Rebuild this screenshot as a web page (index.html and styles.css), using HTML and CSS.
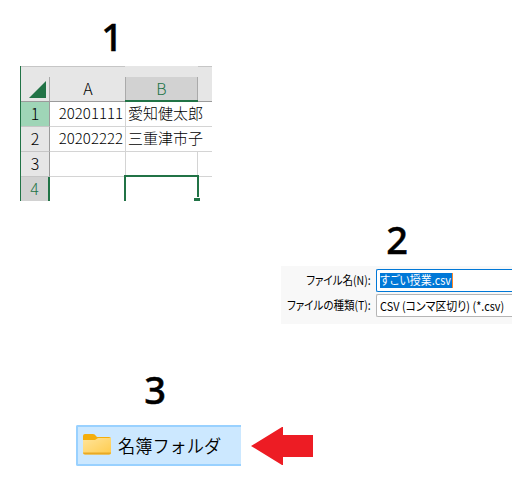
FILE: index.html
```html
<!DOCTYPE html>
<html lang="ja">
<head>
<meta charset="utf-8">
<title>名簿フォルダ</title>
<link rel="stylesheet" href="styles.css">
</head>
<body>
<section class="step step-one">
  <h2 class="number">1</h2>
  <div class="sheet">
    <div class="corner"><svg width="17" height="17" viewBox="0 0 17 17"><path d="M17 0V17H0Z" fill="#217346"/></svg></div>
    <div class="col-head">A</div>
    <div class="col-head active">B</div>
    <div class="col-head"></div>
    <div class="row-head picked">1</div><div class="cell num">20201111</div><div class="cell name">愛知健太郎</div><div class="cell"></div>
    <div class="row-head">2</div><div class="cell num">20202222</div><div class="cell name">三重津市子</div><div class="cell"></div>
    <div class="row-head">3</div><div class="cell"></div><div class="cell ruled"></div><div class="cell"></div>
    <div class="row-head active">4</div><div class="cell last"></div><div class="cell cursor"></div><div class="cell last"></div>
  </div>
</section>
<section class="step step-two">
  <h2 class="number">2</h2>
  <div class="dialog">
    <div class="label"><span class="label-name">ファイル名(N):</span></div>
    <div class="field focus"><span class="selected"><span class="filename">すごい授業.csv</span></span></div>
    <div class="label"><span class="label-type">ファイルの種類(T):</span></div>
    <div class="field"><span class="filetype">CSV (コンマ区切り) (*.csv)</span></div>
  </div>
</section>
<section class="step step-three">
  <h2 class="number">3</h2>
  <div class="target">
    <div class="folder">
      <svg width="28" height="21" viewBox="0 0 28 21">
        <defs><linearGradient id="front" x1="0" y1="0" x2="1" y2="1"><stop offset="0" stop-color="#ffe49b"/><stop offset="1" stop-color="#ffcb4b"/></linearGradient></defs>
        <path d="M0 2Q0 0 2 0H10Q12 0 13 2L14 3H26Q28 3 28 5V10H0Z" fill="#f4ae0c"/>
        <path d="M0 6H12L15 4H28V19Q28 20.5 26 20.5H2Q0 20.5 0 19Z" fill="url(#front)"/>
        <path d="M0 18.5H28Q28 20.5 26 20.5H2Q0 20.5 0 18.5Z" fill="#e9aa25"/>
      </svg>
      <span class="folder-name">名簿フォルダ</span>
    </div>
    <svg class="arrow" width="62" height="38" viewBox="0 0 62 38"><path d="M0 19L31 0H32V8H62V30H32V38H31Z" fill="#ed1c24"/></svg>
  </div>
</section>
</body>
</html>
```
FILE: styles.css
```css
* { box-sizing: border-box; }
body {
  margin: 0;
  width: 532px;
  height: 492px;
  overflow: hidden;
  background: #fff;
  color: #000;
  font-family: "Noto Sans CJK JP", sans-serif;
  display: flex;
  flex-direction: column;
}
svg { display: block; flex: none; }
.number {
  margin: 0;
  width: 40px;
  height: 40px;
  font: 500 38px/38px "Noto Sans", sans-serif;
  -webkit-text-stroke: 0.5px #000;
  text-align: center;
}
.step-one { padding: 17px 0 0 20px; height: 201px; }
.step-one .number { margin: 0 0 9px 72px; }
.sheet {
  width: 192px;
  height: 135px;
  display: grid;
  grid-template-columns: 29px 76px 72px 14px;
  grid-template-rows: 36px 25px 25px 25px 24px;
  border-left: 1px solid #217346;
  overflow: hidden;
}
.corner, .col-head {
  background: #e6e6e6;
  border-top: 1px solid #c6c6c6;
  border-bottom: 1px solid #9b9b9b;
}
.corner {
  padding: 14px 0 0 8px;
  background: linear-gradient(#aaa, #aaa) right bottom / 1px 24px no-repeat #e6e6e6;
}
.col-head {
  padding-top: 9px;
  font: 300 16px/24px "Noto Sans CJK JP", sans-serif;
  text-align: center;
}
.col-head.active {
  padding-top: 0;
  margin-left: -1px;
  border: 0;
  border-bottom: 2px solid #217346;
  line-height: 22px;
  padding-top: 11px;
  background:
    linear-gradient(#e6e6e6, #e6e6e6) top / 100% 11px no-repeat,
    linear-gradient(#aaa, #aaa) left / 1px 100% no-repeat,
    linear-gradient(#aaa, #aaa) right / 1px 100% no-repeat,
    #d2d2d2;
  color: #217346;
}
.row-head {
  background: #e6e6e6;
  border-right: 1px solid #9b9b9b;
  border-bottom: 1px solid #c6c6c6;
  font: 300 16px/22px "Noto Sans CJK JP", sans-serif;
  text-align: center;
}
.row-head.picked { background: #9fd5b7; }
.row-head.active { background: #d2d2d2; color: #217346; border-right: 2px solid #217346; border-bottom: 0; }
.cell {
  border-right: 1px solid #d4d4d4;
  border-bottom: 1px solid #d4d4d4;
  font: 300 15px/22px "Noto Sans CJK JP", sans-serif;
  white-space: nowrap;
}
.cell.num { text-align: right; padding-right: 2px; }
.cell.name { padding-left: 2px; border-right: 0; }
.cell:nth-child(4n) { border-right: 0; }
.cell.last { border-bottom: 0; border-right: 0; }
.cell.cursor {
  position: relative;
  margin: -2px -1px 0 -2px;
  border: 2px solid #217346;
  border-bottom: 0;
}
.cell.cursor::after {
  content: "";
  position: absolute;
  right: -3px;
  bottom: 0;
  width: 6px;
  height: 3px;
  background: #217346;
  border-top: 1px solid #fff;
}
.step-two { padding: 19px 0 0 281px; height: 165px; }
.step-two .number { margin: 0 0 6px 96px; }
.dialog {
  width: 231px;
  height: 58px;
  padding-top: 3px;
  background: #f8f8f8;
  display: grid;
  grid-template-columns: 95px 136px;
  grid-template-rows: 23px 23px;
  row-gap: 2px;
}
.label { display: flex; justify-content: flex-end; padding-right: 5px; }
.label, .field { font-size: 12px; line-height: 22px; white-space: nowrap; font-feature-settings: "palt"; }
.label span { transform: scaleX(.875); transform-origin: right; }
.field {
  padding-left: 3px;
  border: 1px solid #b5b5b5;
  border-right: 0;
  border-radius: 2px 0 0 2px;
  background: #fff;
  line-height: 21px;
}
.field.focus { border-color: #0078d7; padding-top: 3px; }
.selected { display: block; width: 73px; height: 15px; line-height: 14px; background: #0078d7; color: #fff; border-right: 1px solid #ff8728; }
.filename, .filetype { display: inline-block; transform: scaleX(.91); transform-origin: left; }
.step-three { padding: 4px 0 0 76px; }
.step-three .number { margin: 0 0 15px 59px; }
.target { display: flex; gap: 10px; align-items: center; height: 41px; }
.folder {
  width: 165px;
  height: 41px;
  display: flex;
  align-items: center;
  padding-left: 5px;
  gap: 7px;
  background: #cce8ff;
  border: 2px solid #99d1ff;
  border-right: 0;
  border-radius: 2px 0 0 2px;
}
.folder svg { margin-top: -3px; }
.folder-name { font: 350 18px/34px "Noto Sans CJK JP", sans-serif; white-space: nowrap; margin-top: -2px; transform: scaleX(.955); transform-origin: left; }
```
